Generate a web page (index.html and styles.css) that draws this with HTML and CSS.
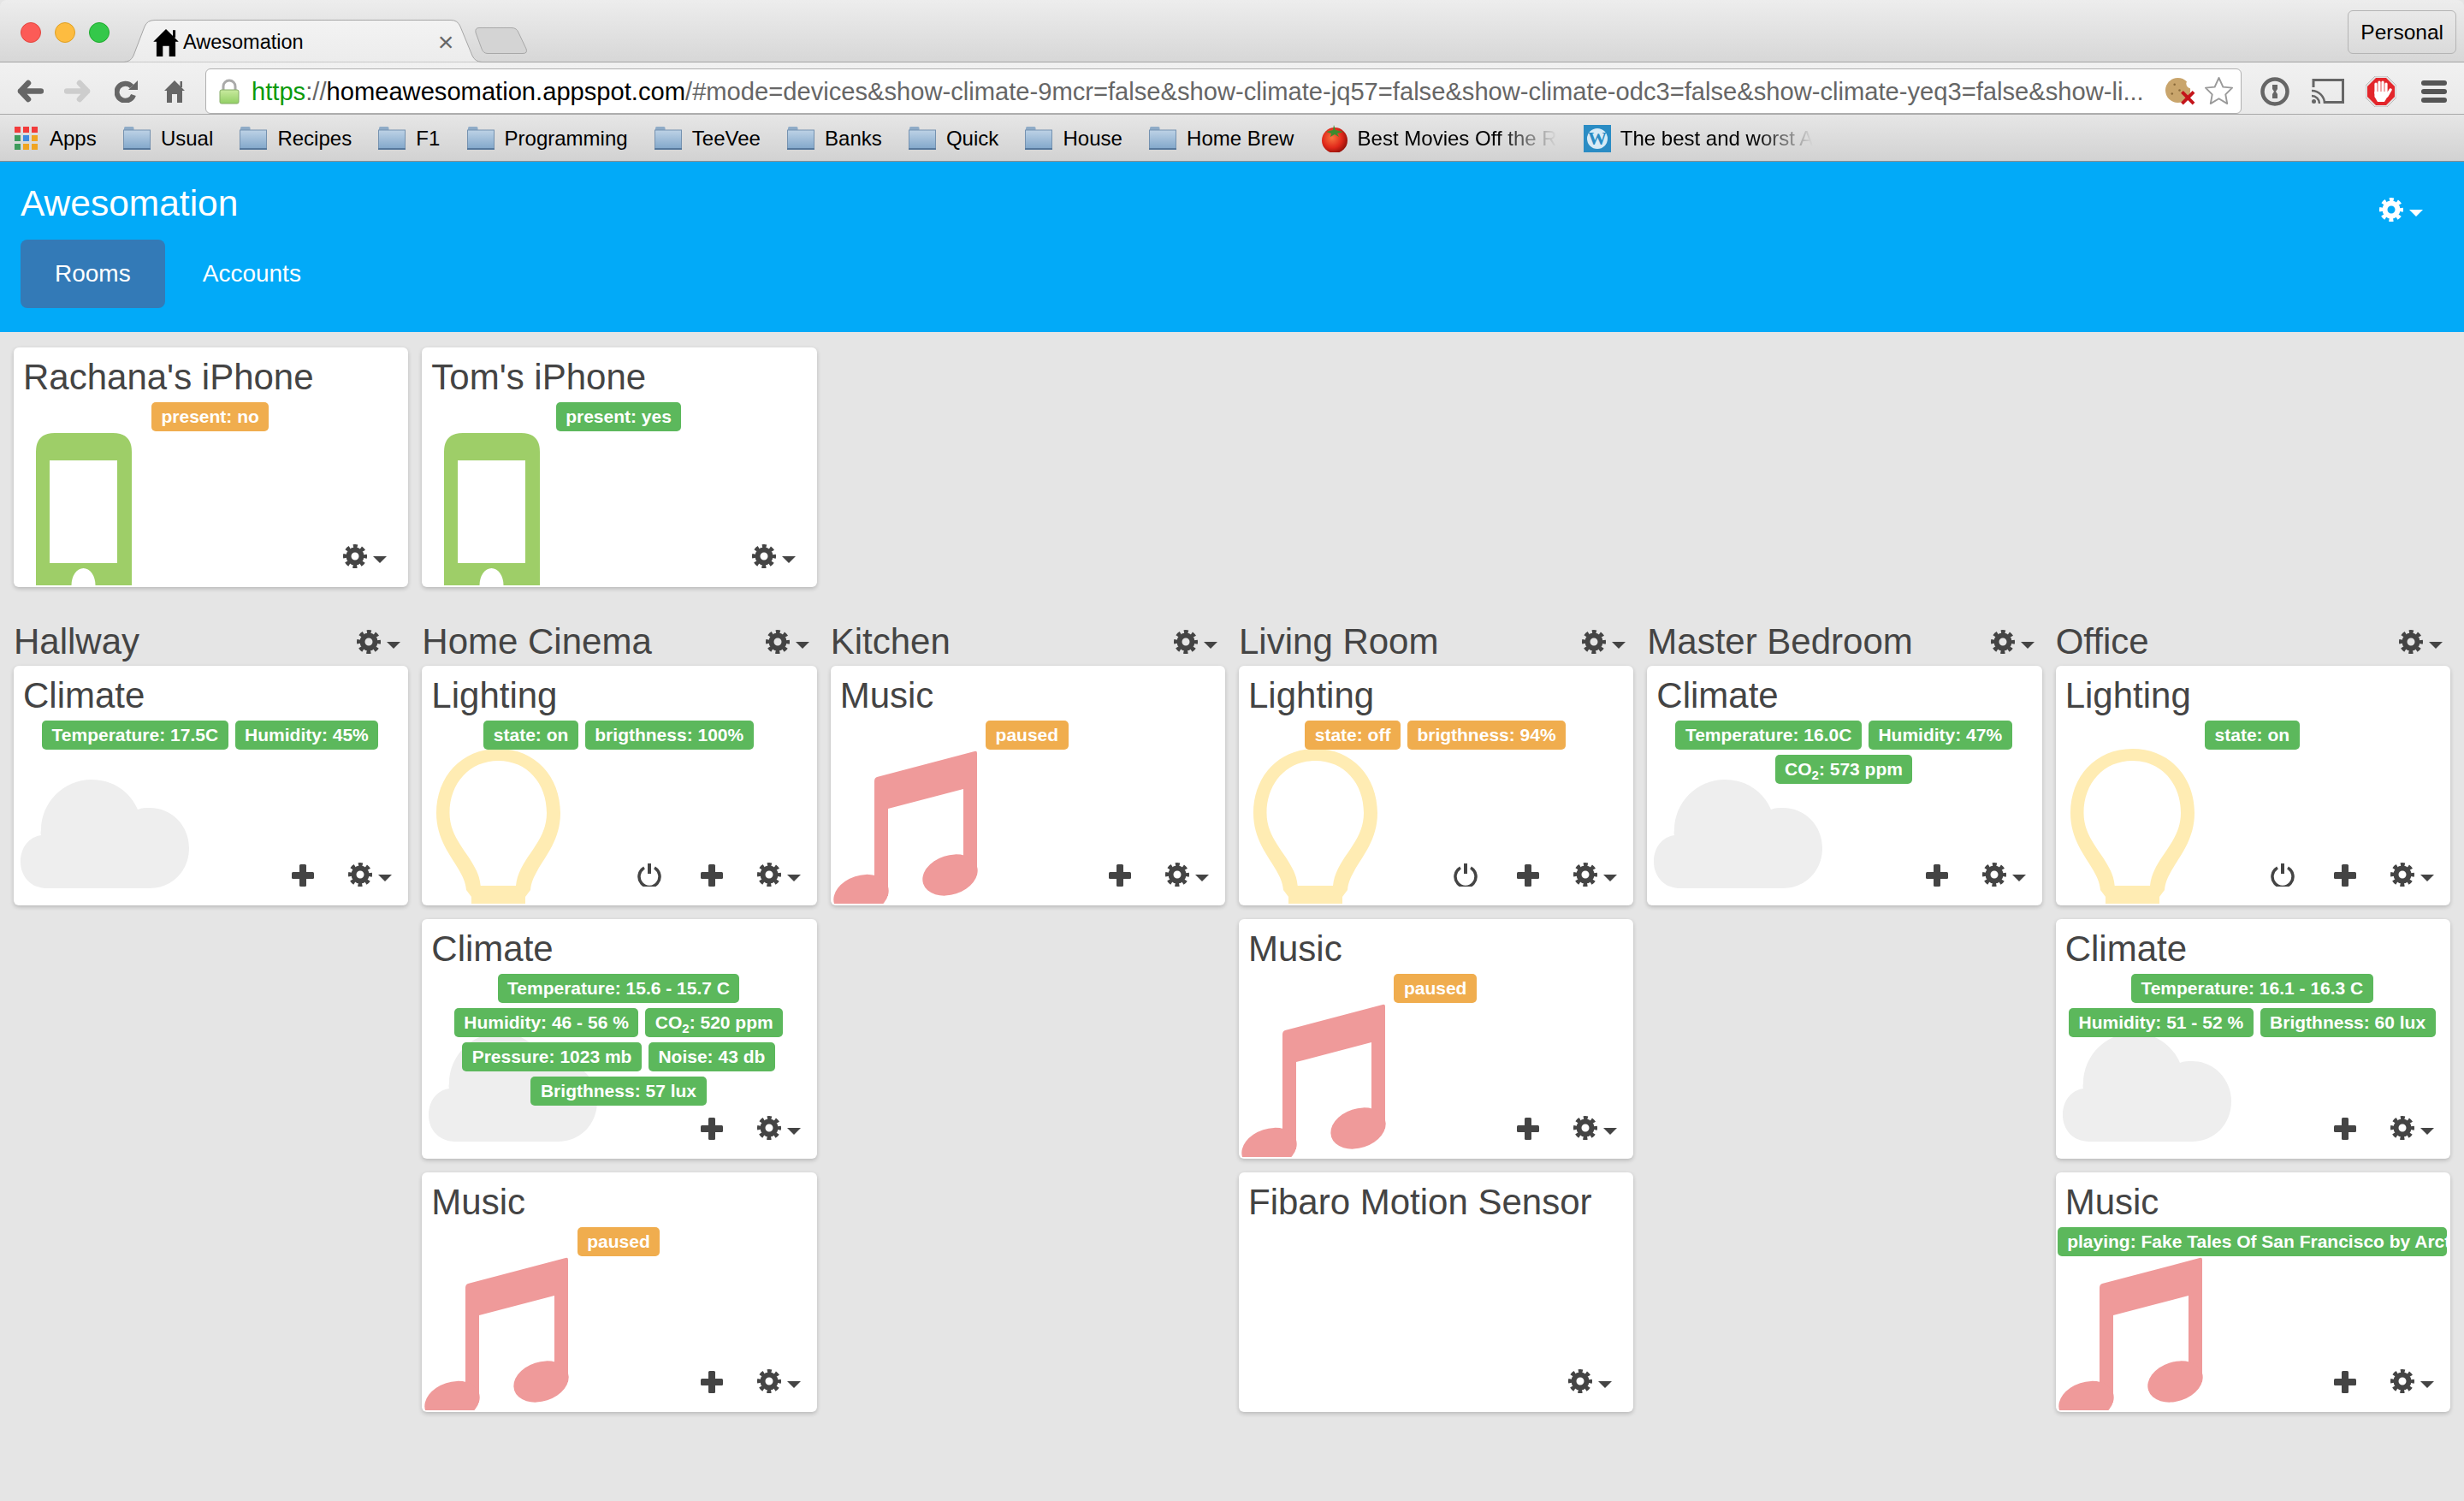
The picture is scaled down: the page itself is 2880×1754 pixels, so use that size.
FILE: index.html
```html
<!doctype html>
<html>
  <head>
    <meta charset="utf-8">
    <title>Awesomation</title>
    <link rel="stylesheet" href="styles.css">
  </head>
  <body>
    <svg class="icon-defs">
      <defs>
        <linearGradient id="folder-fill" x1="0" y1="0" x2="0" y2="1">
          <stop offset="0" stop-color="#bdd2e6"/>
          <stop offset="1" stop-color="#7fa5c9"/>
        </linearGradient>
        <linearGradient id="lock-fill" x1="0" y1="0" x2="0" y2="1">
          <stop offset="0" stop-color="#c9ea9f"/>
          <stop offset="1" stop-color="#92cf64"/>
        </linearGradient>
        <linearGradient id="tab-fill" x1="0" y1="0" x2="0" y2="1">
          <stop offset="0" stop-color="#f3f3f3"/>
          <stop offset="1" stop-color="#ececec"/>
        </linearGradient>
        <radialGradient id="tomato-fill" cx="0.4" cy="0.4" r="0.65">
          <stop offset="0" stop-color="#f9743f"/>
          <stop offset="0.6" stop-color="#e0281a"/>
          <stop offset="1" stop-color="#8f0f08"/>
        </radialGradient>
      </defs>

      <symbol id="house" viewBox="0 0 24 26">
        <path d="M12 0 L24 12 H21 V26 H15 V16 H9 V26 H3 V12 H0 Z"/>
        <rect x="18.5" y="1" width="2.5" height="7"/>
      </symbol>
      <symbol id="arrow" viewBox="0 0 31 27">
        <path d="M13 4 L4 13.5 L13 23 M4 13.5 H28" fill="none" stroke="currentColor" stroke-width="6.5" stroke-linecap="round" stroke-linejoin="round"/>
      </symbol>
      <symbol id="reload" viewBox="0 0 28 26">
        <path d="M20 7 A10 10 0 1 0 22 17" fill="none" stroke="currentColor" stroke-width="6"/>
        <polygon points="27,0 27,11 16,11" fill="currentColor"/>
      </symbol>
      <symbol id="lock" viewBox="0 0 24 30">
        <path d="M5 14 V9 A7 7 0 0 1 19 9 V14" fill="none" stroke="#aaa" stroke-width="3"/>
        <rect x="1" y="13" width="22" height="16" rx="2" fill="url(#lock-fill)" stroke="#86ad68"/>
      </symbol>
      <symbol id="cookie" viewBox="0 0 36 36">
        <circle cx="15" cy="17" r="15" fill="#c9a56c"/>
        <circle cx="31" cy="9" r="6" fill="#fff"/>
        <circle cx="11" cy="10" r="1.3" fill="#8a6a3a"/>
        <circle cx="8" cy="21" r="1.3" fill="#8a6a3a"/>
        <circle cx="17" cy="17" r="1.3" fill="#8a6a3a"/>
        <path d="M20 19 L34 33 M34 19 L20 33" stroke="#c4141a" stroke-width="4"/>
      </symbol>
      <symbol id="star" viewBox="0 0 36 36">
        <path d="M18 2 L23 13 L34 14 L26 22 L28 33 L18 27 L8 33 L10 22 L2 14 L13 13 Z" fill="#fff" stroke="#9a9a9a" stroke-width="2" stroke-linejoin="round"/>
      </symbol>
      <symbol id="onepassword" viewBox="0 0 34 34">
        <circle cx="17" cy="17" r="14.5" fill="none" stroke="#666" stroke-width="4.5"/>
        <path d="M14 9 H20 V14 L18 17 L20 20 V25 H14 V20 L16 17 L14 14 Z" fill="#666"/>
      </symbol>
      <symbol id="cast" viewBox="0 0 38 29">
        <path d="M2 10 V1.5 H36.5 V27.5 H16" fill="none" stroke="#666" stroke-width="3"/>
        <path d="M0 14 A15 15 0 0 1 15 29 M0 20 A9 9 0 0 1 9 29" fill="none" stroke="#666" stroke-width="2.5"/>
        <circle cx="2.5" cy="26.5" r="2.5" fill="#666"/>
      </symbol>
      <symbol id="stop" viewBox="0 0 36 36">
        <polygon points="11,0 25,0 36,11 36,25 25,36 11,36 0,25 0,11" fill="#e4e4e4" stroke="#bbb"/>
        <polygon points="12,2 24,2 34,12 34,24 24,34 12,34 2,24 2,12" fill="#e3262b"/>
        <path d="M12 9 V20 M16 7 V20 M20 7 V20 M24 9 V20" stroke="#fff" stroke-width="3.2" stroke-linecap="round"/>
        <path d="M25 23 L29 16" stroke="#fff" stroke-width="3.4" stroke-linecap="round"/>
        <path d="M10.4 18 H25.6 V24 L22 30 H14 L10.4 24 Z" fill="#fff"/>
      </symbol>
      <symbol id="apps" viewBox="0 0 27 27">
        <rect x="0" y="0" width="7" height="7" fill="#f23b3b"/>
        <rect x="10" y="0" width="7" height="7" fill="#f23b3b"/>
        <rect x="20" y="0" width="7" height="7" fill="#f23b3b"/>
        <rect x="0" y="10" width="7" height="7" fill="#3e9b5c"/>
        <rect x="10" y="10" width="7" height="7" fill="#3f8ae0"/>
        <rect x="20" y="10" width="7" height="7" fill="#f0a422"/>
        <rect x="0" y="20" width="7" height="7" fill="#3e9b5c"/>
        <rect x="10" y="20" width="7" height="7" fill="#f0a422"/>
        <rect x="20" y="20" width="7" height="7" fill="#f0a422"/>
      </symbol>
      <symbol id="folder" viewBox="0 0 32 27">
        <path d="M1 1.5 Q1 0 2.5 0 H11 Q12.5 0 12.5 1.5 V4 H1 Z" fill="#8fabc7"/>
        <rect x="0.5" y="4" width="31" height="23" fill="url(#folder-fill)" stroke="#7592b0"/>
        <rect x="0" y="25" width="32" height="2" fill="#56789c"/>
      </symbol>
      <symbol id="tomato" viewBox="0 0 32 32">
        <circle cx="16" cy="18" r="15" fill="url(#tomato-fill)"/>
        <path d="M15 0 L17 6 L26 8 L19 10 L21 14 L16 11 L11 14 L12 10 L6 8 L14 6 Z" fill="#3f8a2e"/>
      </symbol>

      <symbol id="cog" viewBox="0 0 28 28">
        <circle cx="14" cy="14" r="7.5" fill="none" stroke="currentColor" stroke-width="6"/>
        <circle cx="14" cy="14" r="12" fill="none" stroke="currentColor" stroke-width="4" stroke-dasharray="5 4.42" stroke-dashoffset="2.5"/>
      </symbol>
      <symbol id="caret" viewBox="0 0 16 8">
        <polygon points="0,0 16,0 8,8" fill="currentColor"/>
      </symbol>
      <symbol id="plus" viewBox="0 0 26 26">
        <rect x="9" y="0" width="8" height="26" rx="1.5" fill="currentColor"/>
        <rect x="0" y="9" width="26" height="8" rx="1.5" fill="currentColor"/>
      </symbol>
      <symbol id="power" viewBox="0 0 28 28">
        <path d="M8 6 A12 12 0 1 0 20 6" fill="none" stroke="currentColor" stroke-width="3.5"/>
        <path d="M14 1 V13" stroke="currentColor" stroke-width="4"/>
      </symbol>

      <!-- device pictures are drawn in card coordinates -->
      <symbol id="phone" viewBox="0 0 460 278">
        <path fill="#9ece68" fill-rule="evenodd" d="M26 278 V122 Q26 100 48 100 H116 Q138 100 138 122 V278 Z M42 132 V252 H121 V132 Z M67.5 278 A14 20 0 0 1 95.5 278 Z"/>
      </symbol>
      <symbol id="bulb" viewBox="0 0 460 278">
        <path fill="#ffecb3" fill-rule="evenodd" d="M89.5 97 C46 97 17 130 17 172 C17 215 50 235 52 262 L58 270 V278 H121 V270 L127 262 C129 235 162 215 162 172 C162 130 133 97 89.5 97 Z M89.5 111 C56 111 32.5 137 32.5 172 C32.5 208 66 225 68.7 257 H110 C113 225 146 208 146 172 C146 137 123 111 89.5 111 Z"/>
      </symbol>
      <symbol id="note" viewBox="0 0 460 278">
        <g fill="#ef9a9a">
          <path d="M54 130 Q51 131 51 135 V269 H67 V167 L155 144 V245 H171 V102 Q171 99 168 100 Z"/>
          <ellipse cx="139.5" cy="244.5" rx="33" ry="23" transform="rotate(-18 139.5 244.5)"/>
          <ellipse cx="35.5" cy="268" rx="33" ry="23" transform="rotate(-18 35.5 268)"/>
        </g>
      </symbol>
      <symbol id="cloud" viewBox="0 0 460 278">
        <path fill="#eee" d="M39 260 C20 260 8 246 8 229 C8 212 18 200 32 198 C31 196 32 192 32 192 C32 160 58 133 91 133 C116 133 136 147 145 168 C150 166 154 166 159 166 C185 166 205 187 205 213 C205 240 185 260 159 260 Z"/>
      </symbol>
    </svg>

    <div class="chrome">
      <div class="tabstrip">
        <div class="lights">
          <span class="light light-red"></span>
          <span class="light light-yellow"></span>
          <span class="light light-green"></span>
        </div>
        <div class="tab">
          <svg class="tab-shape" viewBox="0 0 418 50"><path d="M0 49.5 Q8 49 11 42 L24 8 Q27 .5 36 .5 H382 Q390 .5 393 8 L407 42 Q410 49 418 49.5" fill="url(#tab-fill)" stroke="#a6a6a6"/></svg>
          <svg class="tab-favicon"><use href="#house"/></svg>
          <span class="tab-title">Awesomation</span>
          <span class="tab-close">×</span>
        </div>
        <svg class="newtab" viewBox="0 0 63 31"><path d="M6 .5 H44 Q50 .5 52 6 L61 25 Q63 30.5 57 30.5 H16 Q11 30.5 9 25 L2 6 Q1 .5 6 .5 Z" fill="#d4d4d4" stroke="#a8a8a8"/></svg>
        <div class="profile">Personal</div>
      </div>

      <div class="toolbar">
        <svg class="tool-back"><use href="#arrow"/></svg>
        <svg class="tool-forward"><use href="#arrow"/></svg>
        <svg class="tool-reload"><use href="#reload"/></svg>
        <svg class="tool-home"><use href="#house"/></svg>
        <div class="omnibox">
          <svg class="omni-lock"><use href="#lock"/></svg>
          <div class="url"><span class="url-scheme">https</span><span class="url-rest">://</span><span class="url-host">homeawesomation.appspot.com</span><span class="url-rest">/#mode=devices&amp;show-climate-9mcr=false&amp;show-climate-jq57=false&amp;show-climate-odc3=false&amp;show-climate-yeq3=false&amp;show-li...</span></div>
          <svg class="omni-icon"><use href="#cookie"/></svg>
          <svg class="omni-icon"><use href="#star"/></svg>
        </div>
        <svg class="ext ext-onepassword"><use href="#onepassword"/></svg>
        <svg class="ext ext-cast"><use href="#cast"/></svg>
        <svg class="ext ext-stop"><use href="#stop"/></svg>
        <div class="hamburger"><span></span><span></span><span></span></div>
      </div>

      <div class="bookmarks">
        <div class="bookmark"><svg class="bm-icon bm-apps"><use href="#apps"/></svg>Apps</div>
        <div class="bookmark"><svg class="bm-icon"><use href="#folder"/></svg>Usual</div>
        <div class="bookmark"><svg class="bm-icon"><use href="#folder"/></svg>Recipes</div>
        <div class="bookmark"><svg class="bm-icon"><use href="#folder"/></svg>F1</div>
        <div class="bookmark"><svg class="bm-icon"><use href="#folder"/></svg>Programming</div>
        <div class="bookmark"><svg class="bm-icon"><use href="#folder"/></svg>TeeVee</div>
        <div class="bookmark"><svg class="bm-icon"><use href="#folder"/></svg>Banks</div>
        <div class="bookmark"><svg class="bm-icon"><use href="#folder"/></svg>Quick</div>
        <div class="bookmark"><svg class="bm-icon"><use href="#folder"/></svg>House</div>
        <div class="bookmark"><svg class="bm-icon"><use href="#folder"/></svg>Home Brew</div>
        <div class="bookmark"><svg class="bm-icon bm-favicon"><use href="#tomato"/></svg><span class="bm-fade">Best Movies Off the R</span></div>
        <div class="bookmark"><svg class="bm-icon bm-favicon" viewBox="0 0 32 32"><rect width="32" height="32" fill="#2a8cc4"/><circle cx="16" cy="16" r="12" fill="#d8ebf6"/><text class="wp-letter" x="16" y="23" text-anchor="middle">W</text></svg><span class="bm-fade">The best and worst A</span></div>
      </div>
    </div>

    <header class="appbar">
      <div class="appbar-top">
        <div class="brand">Awesomation</div>
        <div class="cog-menu appbar-cog"><svg class="cog"><use href="#cog"/></svg><svg class="caret"><use href="#caret"/></svg></div>
      </div>
      <nav class="pills">
        <a class="pill pill-active">Rooms</a>
        <a class="pill">Accounts</a>
      </nav>
    </header>

    <main class="page">
      <section class="grid">
        <article class="card">
          <svg class="picture"><use href="#phone"/></svg>
          <h3 class="card-title">Rachana's iPhone</h3>
          <div class="labels"><span class="label label-warn">present: no</span></div>
          <div class="actions actions-solo"><div class="cog-menu"><svg class="cog"><use href="#cog"/></svg><svg class="caret"><use href="#caret"/></svg></div></div>
        </article>
        <article class="card">
          <svg class="picture"><use href="#phone"/></svg>
          <h3 class="card-title">Tom's iPhone</h3>
          <div class="labels"><span class="label label-ok">present: yes</span></div>
          <div class="actions actions-solo"><div class="cog-menu"><svg class="cog"><use href="#cog"/></svg><svg class="caret"><use href="#caret"/></svg></div></div>
        </article>
      </section>

      <section class="grid grid-rooms">
        <div class="room">
          <div class="room-head"><h2 class="room-name">Hallway</h2><div class="cog-menu"><svg class="cog"><use href="#cog"/></svg><svg class="caret"><use href="#caret"/></svg></div></div>
          <article class="card">
            <svg class="picture"><use href="#cloud"/></svg>
            <h3 class="card-title">Climate</h3>
            <div class="labels">
              <span class="label label-ok">Temperature: 17.5C</span>
              <span class="label label-ok">Humidity: 45%</span>
            </div>
            <div class="actions"><svg class="plus"><use href="#plus"/></svg><div class="cog-menu"><svg class="cog"><use href="#cog"/></svg><svg class="caret"><use href="#caret"/></svg></div></div>
          </article>
        </div>

        <div class="room">
          <div class="room-head"><h2 class="room-name">Home Cinema</h2><div class="cog-menu"><svg class="cog"><use href="#cog"/></svg><svg class="caret"><use href="#caret"/></svg></div></div>
          <article class="card">
            <svg class="picture"><use href="#bulb"/></svg>
            <h3 class="card-title">Lighting</h3>
            <div class="labels">
              <span class="label label-ok">state: on</span>
              <span class="label label-ok">brigthness: 100%</span>
            </div>
            <div class="actions"><svg class="power"><use href="#power"/></svg><svg class="plus"><use href="#plus"/></svg><div class="cog-menu"><svg class="cog"><use href="#cog"/></svg><svg class="caret"><use href="#caret"/></svg></div></div>
          </article>
          <article class="card">
            <svg class="picture"><use href="#cloud"/></svg>
            <h3 class="card-title">Climate</h3>
            <div class="labels">
              <span class="label label-ok">Temperature: 15.6 - 15.7 C</span>
              <span class="label label-ok">Humidity: 46 - 56 %</span>
              <span class="label label-ok">CO<sub>2</sub>: 520 ppm</span>
              <span class="label label-ok">Pressure: 1023 mb</span>
              <span class="label label-ok">Noise: 43 db</span>
              <span class="label label-ok">Brigthness: 57 lux</span>
            </div>
            <div class="actions"><svg class="plus"><use href="#plus"/></svg><div class="cog-menu"><svg class="cog"><use href="#cog"/></svg><svg class="caret"><use href="#caret"/></svg></div></div>
          </article>
          <article class="card">
            <svg class="picture"><use href="#note"/></svg>
            <h3 class="card-title">Music</h3>
            <div class="labels"><span class="label label-warn">paused</span></div>
            <div class="actions"><svg class="plus"><use href="#plus"/></svg><div class="cog-menu"><svg class="cog"><use href="#cog"/></svg><svg class="caret"><use href="#caret"/></svg></div></div>
          </article>
        </div>

        <div class="room">
          <div class="room-head"><h2 class="room-name">Kitchen</h2><div class="cog-menu"><svg class="cog"><use href="#cog"/></svg><svg class="caret"><use href="#caret"/></svg></div></div>
          <article class="card">
            <svg class="picture"><use href="#note"/></svg>
            <h3 class="card-title">Music</h3>
            <div class="labels"><span class="label label-warn">paused</span></div>
            <div class="actions"><svg class="plus"><use href="#plus"/></svg><div class="cog-menu"><svg class="cog"><use href="#cog"/></svg><svg class="caret"><use href="#caret"/></svg></div></div>
          </article>
        </div>

        <div class="room">
          <div class="room-head"><h2 class="room-name">Living Room</h2><div class="cog-menu"><svg class="cog"><use href="#cog"/></svg><svg class="caret"><use href="#caret"/></svg></div></div>
          <article class="card">
            <svg class="picture"><use href="#bulb"/></svg>
            <h3 class="card-title">Lighting</h3>
            <div class="labels">
              <span class="label label-warn">state: off</span>
              <span class="label label-warn">brigthness: 94%</span>
            </div>
            <div class="actions"><svg class="power"><use href="#power"/></svg><svg class="plus"><use href="#plus"/></svg><div class="cog-menu"><svg class="cog"><use href="#cog"/></svg><svg class="caret"><use href="#caret"/></svg></div></div>
          </article>
          <article class="card">
            <svg class="picture"><use href="#note"/></svg>
            <h3 class="card-title">Music</h3>
            <div class="labels"><span class="label label-warn">paused</span></div>
            <div class="actions"><svg class="plus"><use href="#plus"/></svg><div class="cog-menu"><svg class="cog"><use href="#cog"/></svg><svg class="caret"><use href="#caret"/></svg></div></div>
          </article>
          <article class="card">
            <h3 class="card-title">Fibaro Motion Sensor</h3>
            <div class="actions actions-solo"><div class="cog-menu"><svg class="cog"><use href="#cog"/></svg><svg class="caret"><use href="#caret"/></svg></div></div>
          </article>
        </div>

        <div class="room">
          <div class="room-head"><h2 class="room-name">Master Bedroom</h2><div class="cog-menu"><svg class="cog"><use href="#cog"/></svg><svg class="caret"><use href="#caret"/></svg></div></div>
          <article class="card">
            <svg class="picture"><use href="#cloud"/></svg>
            <h3 class="card-title">Climate</h3>
            <div class="labels">
              <span class="label label-ok">Temperature: 16.0C</span>
              <span class="label label-ok">Humidity: 47%</span>
              <span class="label label-ok">CO<sub>2</sub>: 573 ppm</span>
            </div>
            <div class="actions"><svg class="plus"><use href="#plus"/></svg><div class="cog-menu"><svg class="cog"><use href="#cog"/></svg><svg class="caret"><use href="#caret"/></svg></div></div>
          </article>
        </div>

        <div class="room">
          <div class="room-head"><h2 class="room-name">Office</h2><div class="cog-menu"><svg class="cog"><use href="#cog"/></svg><svg class="caret"><use href="#caret"/></svg></div></div>
          <article class="card">
            <svg class="picture"><use href="#bulb"/></svg>
            <h3 class="card-title">Lighting</h3>
            <div class="labels"><span class="label label-ok">state: on</span></div>
            <div class="actions"><svg class="power"><use href="#power"/></svg><svg class="plus"><use href="#plus"/></svg><div class="cog-menu"><svg class="cog"><use href="#cog"/></svg><svg class="caret"><use href="#caret"/></svg></div></div>
          </article>
          <article class="card">
            <svg class="picture"><use href="#cloud"/></svg>
            <h3 class="card-title">Climate</h3>
            <div class="labels">
              <span class="label label-ok">Temperature: 16.1 - 16.3 C</span>
              <span class="label label-ok">Humidity: 51 - 52 %</span>
              <span class="label label-ok">Brigthness: 60 lux</span>
            </div>
            <div class="actions"><svg class="plus"><use href="#plus"/></svg><div class="cog-menu"><svg class="cog"><use href="#cog"/></svg><svg class="caret"><use href="#caret"/></svg></div></div>
          </article>
          <article class="card">
            <svg class="picture"><use href="#note"/></svg>
            <h3 class="card-title">Music</h3>
            <div class="labels"><span class="label label-ok">playing: Fake Tales Of San Francisco by Arctic Monkeys</span></div>
            <div class="actions"><svg class="plus"><use href="#plus"/></svg><div class="cog-menu"><svg class="cog"><use href="#cog"/></svg><svg class="caret"><use href="#caret"/></svg></div></div>
          </article>
        </div>
      </section>
    </main>
  </body>
</html>
```

FILE: styles.css
```css
*,*:before,*:after {
  box-sizing: border-box;
}

html,
body {
  margin: 0;
  padding: 0;
  background-color: #e5e5e5;
}

body {
  min-height: 100vh;
  overflow: hidden;
  font-family: "Liberation Sans", Arial, sans-serif;
  color: #444;
}

.icon-defs {
  position: absolute;
  width: 0;
  height: 0;
}

/* browser chrome */

.tabstrip {
  display: flex;
  height: 73px;
  border-bottom: 1px solid #a5a5a5;
  border-radius: 8px 8px 0 0;
  background: linear-gradient(#ededed, #d7d7d7);
}

.lights {
  display: flex;
  gap: 16px;
  margin: 26px 0 0 24px;
}

.light {
  width: 24px;
  height: 24px;
  border-radius: 50%;
}

.light-red { background-color: #fc5b57; border: 1px solid #e2463f; }
.light-yellow { background-color: #fdbc40; border: 1px solid #dfa023; }
.light-green { background-color: #34c84a; border: 1px solid #1eab2c; }

.tab {
  position: relative;
  display: flex;
  align-items: center;
  width: 418px;
  height: 50px;
  margin: 23px 0 0 17px;
  padding: 3px 0 0 33px;
  font-size: 23.5px;
  color: #000;
}

.tab-shape {
  position: absolute;
  left: 0;
  top: 0;
  width: 418px;
  height: 50px;
  overflow: visible;
}

.tab-favicon {
  position: relative;
  width: 32px;
  height: 32px;
  fill: #000;
}

.tab-title {
  position: relative;
  margin-left: 4px;
}

.tab-close {
  position: relative;
  margin-left: 157px;
  font-size: 32px;
  color: #666;
}

.newtab {
  width: 63px;
  height: 31px;
  margin: 32px 0 0 -9px;
}

.profile {
  height: 51px;
  margin: 12px 9px 0 auto;
  padding: 0 14px;
  border: 1px solid #b4b4b4;
  border-radius: 6px;
  font-size: 24.5px;
  line-height: 49px;
  color: #000;
}

.toolbar {
  display: flex;
  align-items: center;
  height: 60px;
  padding: 7px 20px 0;
  background: linear-gradient(#f1f1f1, #e9e9e9);
}

.tool-back {
  width: 31px;
  height: 27px;
  color: #666;
}

.tool-forward {
  width: 31px;
  height: 27px;
  margin-left: 24px;
  color: #cdcdcd;
  transform: scaleX(-1);
}

.tool-reload {
  width: 28px;
  height: 26px;
  margin-left: 28px;
  color: #666;
}

.tool-home {
  width: 24px;
  height: 26px;
  margin-left: 30px;
  fill: #666;
}

.omnibox {
  display: flex;
  align-items: center;
  width: 2380px;
  height: 53px;
  margin-left: 24px;
  padding: 0 8px 0 15px;
  border: 1px solid #b0b0b0;
  border-radius: 6px;
  background-color: #fff;
}

.omni-lock {
  flex: none;
  width: 24px;
  height: 30px;
}

.url {
  flex: 1;
  min-width: 0;
  margin-left: 14px;
  padding-top: 2px;
  overflow: hidden;
  font-size: 29.15px;
  white-space: nowrap;
}

.url-scheme { color: #0a9a0a; }
.url-host { color: #000; }
.url-rest { color: #666; }

.omni-icon {
  flex: none;
  width: 35px;
  height: 35px;
  margin-left: 10px;
}

.ext {
  flex: none;
}

.ext-onepassword {
  width: 34px;
  height: 34px;
  margin-left: 22px;
}

.ext-cast {
  width: 38px;
  height: 29px;
  margin-left: 26px;
}

.ext-stop {
  width: 36px;
  height: 36px;
  margin-left: 25px;
}

.hamburger {
  display: flex;
  flex-direction: column;
  gap: 4px;
  width: 30px;
  margin-left: 29px;
}

.hamburger span {
  height: 6px;
  border-radius: 3px;
  background-color: #555;
}

.bookmarks {
  display: flex;
  align-items: center;
  height: 56px;
  padding: 1px 0 0 17px;
  gap: 31.2px;
  border-top: 1px solid #a8a8a8;
  border-bottom: 1px solid #8c8c8c;
  background: linear-gradient(#e6e6e6, #d2d2d2);
  font-size: 24px;
  color: #000;
}

.bookmark {
  display: flex;
  align-items: center;
  gap: 12px;
}

.bm-icon {
  flex: none;
  width: 32px;
  height: 27px;
}

.bm-apps {
  width: 27px;
  margin-right: 2px;
}

.bm-favicon {
  height: 32px;
  margin-right: -1px;
}

.bm-fade {
  -webkit-mask-image: linear-gradient(to right, #000 70%, transparent 100%);
  mask-image: linear-gradient(to right, #000 70%, transparent 100%);
}

.wp-letter {
  font-family: "Liberation Serif", serif;
  font-size: 22px;
  font-weight: bold;
  fill: #2a8cc4;
}

/* app header */

.appbar {
  height: 199px;
  padding: 21px 48px 0 24px;
  background-color: #02aaf8;
  color: #fff;
}

.appbar-top {
  display: flex;
  justify-content: space-between;
}

.brand {
  font-size: 42.5px;
  line-height: 56px;
}

.appbar-cog {
  margin-top: 17px;
  margin-bottom: 3px;
}

.pills {
  display: flex;
  gap: 4px;
  margin-top: 14px;
}

.pill {
  height: 80px;
  padding: 0 40px;
  border-radius: 8px;
  font-size: 28px;
  line-height: 80px;
}

.pill-active {
  background-color: #337ab7;
}

/* rooms */

.page {
  padding: 18px 16px 0;
}

.grid {
  display: grid;
  grid-template-columns: repeat(6, minmax(0, 1fr));
  column-gap: 16px;
  align-items: start;
}

.grid-rooms {
  margin-top: 36px;
}

.room {
  display: flex;
  flex-direction: column;
  gap: 16px;
}

.room-head {
  display: flex;
  justify-content: space-between;
  align-items: center;
  height: 56px;
  margin-bottom: -16px;
  padding: 0 9px 0 0;
}

.room-name {
  margin: 0;
  font-size: 42px;
  font-weight: normal;
  line-height: 56px;
}

.card {
  position: relative;
  height: 280px;
  overflow: hidden;
  border-radius: 6px;
  background-color: #fff;
  box-shadow: 0 2px 5px rgba(0,0,0,0.2);
}

.picture {
  position: absolute;
  left: 0;
  top: 0;
  width: 460px;
  height: 278px;
}

.card-title {
  position: relative;
  margin: 0;
  padding: 11px 0 0 11px;
  font-size: 42px;
  font-weight: normal;
  line-height: 48px;
}

.labels {
  position: relative;
  display: flex;
  flex-wrap: wrap;
  justify-content: center;
  gap: 6px 8px;
  margin-top: 5px;
  padding: 0 4px 0 2px;
}

.label {
  max-width: 100%;
  overflow: hidden;
  padding: 6px 11.5px 7px;
  border-radius: 5px;
  color: #fff;
  font-size: 21px;
  font-weight: bold;
  line-height: 21px;
  white-space: nowrap;
}

.label sub {
  font-size: 15px;
  line-height: 0;
}

.label-ok { background-color: #5cb85c; }
.label-warn { background-color: #f0ad4e; }

.actions {
  position: absolute;
  right: 19px;
  bottom: 22px;
  display: flex;
  align-items: flex-end;
}

.actions-solo {
  right: 25px;
}

.power {
  width: 28px;
  height: 28px;
  margin-right: 46px;
}

.plus {
  width: 26px;
  height: 26px;
  margin-right: 40px;
}

.cog-menu {
  display: flex;
  align-items: center;
  gap: 7px;
}

.cog {
  width: 28px;
  height: 28px;
}

.caret {
  width: 16px;
  height: 8px;
  margin-top: 8px;
}
```
